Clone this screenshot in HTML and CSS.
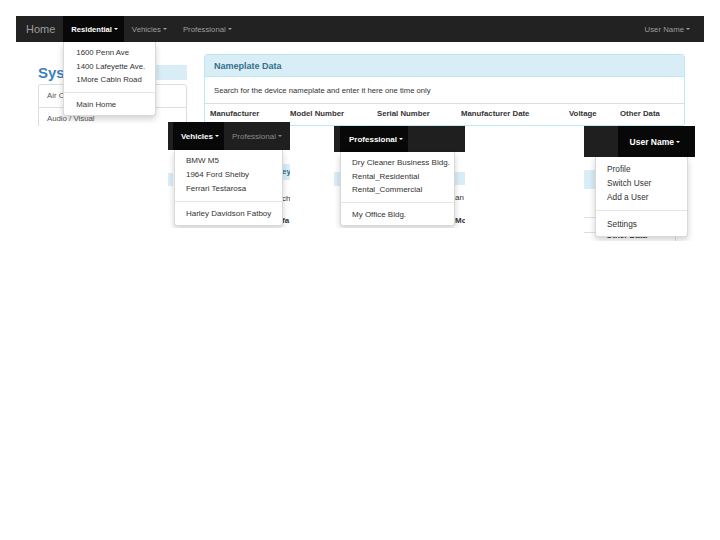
FILE: index.html
```html
<!DOCTYPE html>
<html>
<head>
<meta charset="utf-8">
<link rel="stylesheet" href="styles.css">
</head>
<body>
<div class="shot-main">
  <div class="navbar">
    <div class="nav-item nav-brand">Home</div>
    <div class="nav-item active act-res">Residential<span class="caret"></span>
      <div class="dropdown dd-res">
        <div class="dd-item">1600 Penn Ave</div>
        <div class="dd-item">1400 Lafeyette Ave.</div>
        <div class="dd-item">1More Cabin Road</div>
        <div class="dd-divider"></div>
        <div class="dd-item">Main Home</div>
      </div>
    </div>
    <div class="nav-item">Vehicles<span class="caret"></span></div>
    <div class="nav-item">Professional<span class="caret"></span></div>
    <div class="nav-spacer"></div>
    <div class="nav-item nav-user">User Name<span class="caret"></span></div>
  </div>
  <div class="content">
    <div class="sidebar">
      <div class="side-head"><span class="side-title">Systems</span><span class="side-band"></span></div>
      <div class="list">
        <div class="list-item">Air Conditioning</div>
        <div class="list-item">Audio / Visual</div>
      </div>
    </div>
    <div class="panel">
      <div class="panel-head">Nameplate Data</div>
      <div class="panel-body">Search for the device nameplate and enter it here one time only</div>
      <div class="table-head">
        <span>Manufacturer</span><span>Model Number</span><span>Serial Number</span><span>Manufacturer Date</span><span>Voltage</span><span>Other Data</span>
      </div>
    </div>
  </div>
</div>

<div class="snip snip-veh">
  <div class="snav snav-veh">
    <div class="snav-pad pad-veh"></div>
    <div class="nav-item active act-veh">Vehicles<span class="caret"></span>
      <div class="dropdown dd-veh">
        <div class="dd-item">BMW M5</div>
        <div class="dd-item">1964 Ford Shelby</div>
        <div class="dd-item">Ferrari Testarosa</div>
        <div class="dd-divider"></div>
        <div class="dd-item">Harley Davidson Fatboy</div>
      </div>
    </div>
    <div class="nav-item dim">Professional<span class="caret"></span></div>
  </div>
  <div class="sbody">
    <div class="frag frag-veh-l"><div class="fband"></div></div>
    <div class="frag frag-veh-r">
      <div class="fband">ey</div>
      <div class="ftext t1">ch</div>
      <div class="ftext t2 bold">fa</div>
    </div>
  </div>
</div>

<div class="snip snip-pro">
  <div class="snav snav-pro">
    <div class="snav-pad pad-pro"></div>
    <div class="nav-item active act-pro">Professional<span class="caret"></span>
      <div class="dropdown dd-pro">
        <div class="dd-item">Dry Cleaner Business Bldg.</div>
        <div class="dd-item">Rental_Residential</div>
        <div class="dd-item">Rental_Commercial</div>
        <div class="dd-divider"></div>
        <div class="dd-item">My Office Bldg.</div>
      </div>
    </div>
  </div>
  <div class="sbody">
    <div class="frag frag-pro-l"><div class="fband"></div></div>
    <div class="frag frag-pro-r">
      <div class="fband"></div>
      <div class="ftext t1">an</div>
      <div class="ftext t2 bold">Mo</div>
    </div>
  </div>
</div>

<div class="snip snip-user">
  <div class="snav snav-user">
    <div class="snav-pad pad-user"></div>
    <div class="nav-item active act-user">User Name<span class="caret"></span>
      <div class="dropdown dd-user">
        <div class="dd-item">Profile</div>
        <div class="dd-item">Switch User</div>
        <div class="dd-item">Add a User</div>
        <div class="dd-divider"></div>
        <div class="dd-item">Settings</div>
      </div>
    </div>
  </div>
  <div class="sbody sbody-user">
    <div class="frag frag-user-l">
      <div class="fband"></div>
      <div class="fline l1"></div>
      <div class="fline l2"></div>
    </div>
    <div class="user-bottom"><span>Other Data</span></div>
  </div>
</div>
</body>
</html>
```
FILE: styles.css
```css
* { box-sizing: border-box; }

body {
  margin: 0;
  width: 720px;
  height: 540px;
  position: relative;
  overflow: hidden;
  background: #fff;
  font-family: "Liberation Sans", Arial, sans-serif;
  color: #333;
}

/* ---------- main screenshot ---------- */
.shot-main {
  margin: 16px 0 0 16px;
  width: 688px;
  height: 110px;
  overflow: hidden;
}

.navbar {
  display: flex;
  height: 26px;
  background: #222;
  font-size: 7.8px;
  color: #9d9d9d;
}

.nav-item {
  display: flex;
  align-items: center;
  padding: 0 8px;
  position: relative;
  white-space: nowrap;
}

.nav-brand {
  font-size: 11px;
  padding: 0 8px 0 10px;
}

.nav-item.active {
  background: #080808;
  color: #fff;
  font-weight: bold;
}

.act-res {
  font-size: 7.6px;
  padding: 0 6px 0 8px;
}

.nav-item.dim { color: #8a8a8a; }

.caret {
  display: inline-block;
  width: 0;
  height: 0;
  border-top: 2px solid;
  border-left: 2px solid transparent;
  border-right: 2px solid transparent;
  margin-left: 2px;
}

.nav-spacer { flex: 1; }
.nav-user { padding-right: 14px; }

.dropdown {
  position: absolute;
  top: 100%;
  left: 0;
  background: #fff;
  border: 1px solid rgba(0, 0, 0, .15);
  border-top: none;
  border-radius: 0 0 3px 3px;
  box-shadow: 0 3px 6px rgba(0, 0, 0, .18);
  padding: 4px 0;
  font-size: 7.8px;
  font-weight: normal;
  color: #333;
  z-index: 5;
}

.dd-item {
  height: 13.5px;
  line-height: 13.5px;
  padding: 0 11px;
  white-space: nowrap;
}

.dd-divider {
  height: 1px;
  background: #e5e5e5;
  margin: 5px 0;
}

.dd-res { width: 93px; font-size: 7.8px; }
.dd-res .dd-item { padding-left: 12px; }

.content {
  display: flex;
  height: 84px;
}

.sidebar {
  margin-left: 22px;
  width: 149px;
  padding-top: 23px;
}

.side-head {
  display: flex;
  height: 15px;
  align-items: stretch;
}

.side-title {
  font-size: 15px;
  line-height: 15px;
  font-weight: bold;
  color: #3d82bb;
  padding-right: 4px;
}

.side-band {
  flex: 1;
  background: #d9edf7;
}

.list {
  margin-top: 4px;
  border: 1px solid #ddd;
  border-radius: 3px;
}

.list-item {
  height: 22px;
  line-height: 22px;
  padding-left: 8px;
  font-size: 7.8px;
  color: #555;
  border-top: 1px solid #ddd;
  white-space: nowrap;
}

.list-item:first-child { border-top: none; }

.panel {
  margin: 12px 0 0 17px;
  width: 481px;
  border: 1px solid #bce8f1;
  border-radius: 3px;
}

.panel-head {
  height: 22px;
  display: flex;
  align-items: center;
  padding-left: 9px;
  background: #d9edf7;
  border-bottom: 1px solid #bce8f1;
  color: #31708f;
  font-weight: bold;
  font-size: 9px;
}

.panel-body {
  height: 26px;
  display: flex;
  align-items: center;
  padding-left: 9px;
  font-size: 7.7px;
  color: #333;
}

.table-head {
  display: grid;
  grid-template-columns: 80px 87px 84px 108px 51px 1fr;
  align-items: center;
  height: 20px;
  padding-left: 5px;
  border-top: 1px solid #ddd;
  font-size: 7.8px;
  font-weight: bold;
  white-space: nowrap;
}

/* ---------- snippets ---------- */
.snip {
  position: absolute;
  overflow: hidden;
  background: #fff;
}

.snip-veh { left: 168px; top: 122px; width: 122px; height: 106px; }
.snip-pro { left: 334px; top: 126px; width: 131px; height: 102px; }
.snip-user { left: 584px; top: 126px; width: 111px; height: 115px; }

.snav {
  display: flex;
  background: #1f1f1f;
  font-size: 8px;
  color: #9d9d9d;
}

.snav-veh { height: 28px; }
.snav-pro { height: 26px; }
.snav-user { height: 31px; font-size: 8.5px; }

.pad-veh { width: 5px; }
.pad-pro { width: 6px; }
.pad-user { width: 36px; }

.act-veh { padding: 0 5px 0 8px; }
.act-pro { padding: 0 5px 0 9px; }
.act-user { padding: 0 15px 0 12px; }

.dd-veh { width: 109px; left: 1px; font-size: 8px; }
.dd-veh .dd-item { height: 14px; line-height: 14px; }

.dd-pro { width: 115px; font-size: 8px; }

.dd-user {
  left: auto;
  right: 7px;
  width: 93px;
  font-size: 8.3px;
  padding: 5px 0;
}
.dd-user .dd-item { height: 14px; line-height: 14px; }
.dd-user .dd-divider { margin: 6px 0; }

.sbody {
  display: flex;
  justify-content: space-between;
  height: 100%;
}

.frag {
  display: flex;
  flex-direction: column;
  font-size: 8px;
  white-space: nowrap;
  overflow: hidden;
}

.fband {
  background: #d9edf7;
  color: #31708f;
  font-weight: bold;
  font-size: 8px;
  line-height: 16px;
}

.ftext { height: 10px; line-height: 10px; color: #333; }
.ftext.bold { font-weight: bold; }

.frag-veh-l { width: 5px; padding-top: 23px; }
.frag-veh-l .fband { height: 13px; }
.frag-veh-r { width: 8px; padding-top: 14px; }
.frag-veh-r .fband { height: 16px; }
.frag-veh-r .t1 { margin-top: 14px; }
.frag-veh-r .t2 { margin-top: 12px; }

.frag-pro-l { width: 6px; padding-top: 20px; }
.frag-pro-l .fband { height: 14px; }
.frag-pro-r { width: 10px; padding-top: 20px; }
.frag-pro-r .fband { height: 13px; }
.frag-pro-r .t1 { margin-top: 8px; }
.frag-pro-r .t2 { margin-top: 13px; }

.sbody-user {
  flex-direction: column;
  justify-content: flex-start;
}

.frag-user-l { width: 11px; padding-top: 13px; height: 76px; }
.frag-user-l .fband { height: 20px; }
.fline { height: 1px; background: #ddd; }
.fline.l1 { margin-top: 28px; }
.fline.l2 { margin-top: 14px; }

.user-bottom {
  width: 92px;
  padding-left: 22px;
  height: 10px;
  border-right: 1px solid #ddd;
  font-size: 8px;
  font-weight: bold;
  line-height: 6px;
  white-space: nowrap;
  overflow: hidden;
}
```
